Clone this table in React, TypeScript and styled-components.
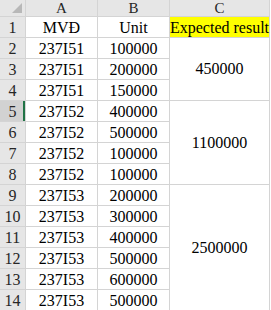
import React from 'react';
import styled, {createGlobalStyle} from 'styled-components';

const GlobalStyle = createGlobalStyle`
  html, body {
    margin: 0;
    padding: 0;
    background: #ffffff;
  }
`

type Row = {mvd: string, unit: string}

const rows: Row[] = [
    {mvd: '237I51', unit: '100000'},
    {mvd: '237I51', unit: '200000'},
    {mvd: '237I51', unit: '150000'},
    {mvd: '237I52', unit: '400000'},
    {mvd: '237I52', unit: '500000'},
    {mvd: '237I52', unit: '100000'},
    {mvd: '237I52', unit: '100000'},
    {mvd: '237I53', unit: '200000'},
    {mvd: '237I53', unit: '300000'},
    {mvd: '237I53', unit: '400000'},
    {mvd: '237I53', unit: '500000'},
    {mvd: '237I53', unit: '600000'},
    {mvd: '237I53', unit: '500000'},
]

// merged result cells in column C: first data row (sheet row) and how many rows
const results = [
    {start: 2, span: 3, value: '450000'},
    {start: 5, span: 4, value: '1100000'},
    {start: 9, span: 6, value: '2500000'},
]

const ACTIVE_ROW = 5

export default function App() {
    return (
        <>
            <GlobalStyle/>
            <Sheet>
                <Corner><CornerMark/></Corner>
                <ColHead>A</ColHead>
                <ColHead>B</ColHead>
                <ColHead>C</ColHead>

                <RowHead $row={1}>1</RowHead>
                <Cell $row={1} $col={2}>MVĐ</Cell>
                <Cell $row={1} $col={3}>Unit</Cell>
                <Cell $row={1} $col={4} $fill="#ffff00">Expected result</Cell>

                {rows.map((r, i) => {
                    const n = i + 2;
                    return (
                        <React.Fragment key={n}>
                            <RowHead $row={n} $active={n === ACTIVE_ROW}>{n}</RowHead>
                            <Cell $row={n} $col={2}>{r.mvd}</Cell>
                            <Cell $row={n} $col={3}>{r.unit}</Cell>
                        </React.Fragment>
                    )
                })}

                {results.map(m => (
                    <Merged key={m.start} $row={m.start} $span={m.span}>{m.value}</Merged>
                ))}
            </Sheet>
        </>
    );
}

const Sheet = styled.div`
  display: grid;
  grid-template-columns: 25px 71px 71px 99px;
  grid-template-rows: 16px repeat(14, 20px);
  gap: 1px;
  width: max-content;
  padding: 0 1px 1px 0;
  background: #d4d4d4;
  font-family: "Liberation Serif", "Times New Roman", serif;
  font-size: 16px;
  color: #000;
`
const Corner = styled.div`
  position: relative;
  background: #e6e6e6;
`
const CornerMark = styled.div`
  position: absolute;
  right: 3px;
  bottom: 3px;
  width: 0;
  height: 0;
  border-left: 10px solid transparent;
  border-bottom: 10px solid #b8b8b8;
`
const ColHead = styled.div`
  display: flex;
  align-items: center;
  justify-content: center;
  background: #e6e6e6;
  color: #262626;
  font-size: 15px;
  line-height: 1;
`
type RowProps = {$row: number, $active?: boolean}
const RowHead = styled.div<RowProps>`
  grid-column: 1;
  grid-row: ${p => p.$row + 1};
  display: flex;
  align-items: flex-end;
  justify-content: center;
  padding-bottom: 1px;
  background: ${p => p.$active ? '#d2d2d2' : '#e6e6e6'};
  box-shadow: ${p => p.$active ? 'inset -2px 0 0 #217346' : 'none'};
  color: #262626;
  line-height: 1;
`
type CellProps = {$row: number, $col: number, $fill?: string}
const Cell = styled.div<CellProps>`
  grid-column: ${p => p.$col};
  grid-row: ${p => p.$row + 1};
  display: flex;
  align-items: flex-end;
  justify-content: center;
  padding-bottom: 1px;
  background: ${p => p.$fill ?? '#ffffff'};
  white-space: nowrap;
  line-height: 1;
`
type MergedProps = {$row: number, $span: number}
const Merged = styled.div<MergedProps>`
  grid-column: 4;
  grid-row: ${p => p.$row + 1} / span ${p => p.$span};
  display: flex;
  align-items: center;
  justify-content: center;
  background: #ffffff;
  line-height: 1;
`
